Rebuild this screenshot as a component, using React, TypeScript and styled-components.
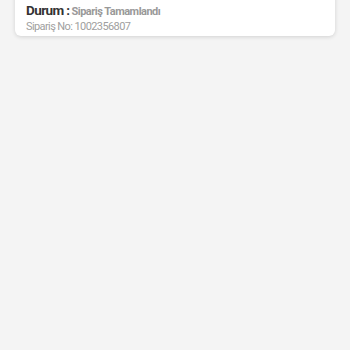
import React from "react";
import styled, { createGlobalStyle } from "styled-components";

const Global = createGlobalStyle`
  html, body { margin: 0; padding: 0; background: #f4f4f4; }
  body { font-family: "Roboto", "Noto Sans", sans-serif; }
`;

const Page = styled.div`
  width: 350px;
  height: 350px;
  background: #f4f4f4;
  padding: 0 15px;
  box-sizing: border-box;
`;

const Card = styled.div`
  margin-top: -10px;
  background: #fff;
  border-radius: 6px;
  box-shadow: 0 1px 4px rgba(0, 0, 0, 0.14);
  padding: 13px 11px 2px;
  display: flex;
  flex-direction: column;
`;

const StatusLine = styled.div`
  display: flex;
  align-items: baseline;
  gap: 2px;
  line-height: 15px;
`;

const Label = styled.span`
  font-size: 13.5px;
  font-weight: 700;
  letter-spacing: -0.6px;
  color: #333;
`;

const Value = styled.span`
  font-size: 11px;
  font-weight: 700;
  letter-spacing: -0.5px;
  color: #999;
`;

const OrderNo = styled.div`
  font-size: 11px;
  color: #a0a0a0;
  letter-spacing: -0.6px;
  line-height: 15px;
`;

export default function App() {
  return (
    <>
      <Global />
      <Page>
        <Card>
          <StatusLine>
            <Label>Durum :</Label>
            <Value>Sipariş Tamamlandı</Value>
          </StatusLine>
          <OrderNo>Sipariş No: 1002356807</OrderNo>
        </Card>
      </Page>
    </>
  );
}
